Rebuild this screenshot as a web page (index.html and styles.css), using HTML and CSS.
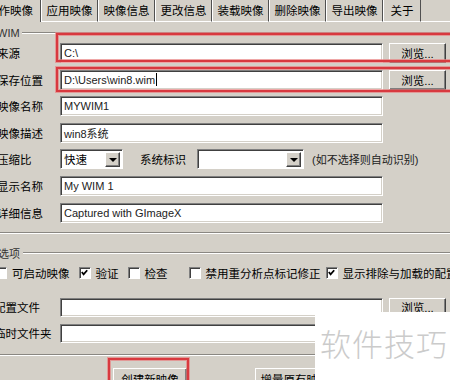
FILE: index.html
```html
<!DOCTYPE html>
<html lang="zh-CN">
<head>
    <meta charset="UTF-8">
    <title>GImageX</title>
    <link rel="stylesheet" href="styles.css">
</head>
<body>
    <div class="window">
        <div class="tabs">
            <div class="tab active">制作映像</div>
            <div class="tab">应用映像</div>
            <div class="tab">映像信息</div>
            <div class="tab">更改信息</div>
            <div class="tab">装载映像</div>
            <div class="tab">删除映像</div>
            <div class="tab">导出映像</div>
            <div class="tab short">关于</div>
            <div class="tab-rest"></div>
        </div>

        <div class="group wim">
            <div class="legend"><span>WIM</span><i class="etch"></i></div>

            <div class="rows">
                <div class="row">
                    <label>来源</label>
                    <div class="field">C:\</div>
                    <button class="btn browse">浏览...</button>
                </div>
                <div class="row">
                    <label>保存位置</label>
                    <div class="field">D:\Users\win8.wim<span class="caret"></span></div>
                    <button class="btn browse">浏览...</button>
                </div>
                <div class="row">
                    <label>映像名称</label>
                    <div class="field">MYWIM1</div>
                </div>
                <div class="row">
                    <label>映像描述</label>
                    <div class="field">win8系统</div>
                </div>
                <div class="row">
                    <label>压缩比</label>
                    <div class="select small"><span>快速</span><i class="arrow"></i></div>
                    <span class="inline-label">系统标识</span>
                    <div class="select wide"><span></span><i class="arrow"></i></div>
                    <span class="note">(如不选择则自动识别)</span>
                </div>
                <div class="row">
                    <label>显示名称</label>
                    <div class="field">My WIM 1</div>
                </div>
                <div class="row">
                    <label>详细信息</label>
                    <div class="field">Captured with GImageX</div>
                </div>
            </div>
        </div>
        <div class="etch-line"></div>

        <div class="group options">
            <div class="legend"><span>选项</span><i class="etch"></i></div>

            <div class="checks">
                <div class="check"><i class="box"></i>可启动映像</div>
                <div class="check"><i class="box checked"><svg viewBox="0 0 10 10"><polyline points="2,4.5 4,7 8,2.5" /></svg></i>验证</div>
                <div class="check far"><i class="box"></i>检查</div>
                <div class="check near"><i class="box"></i>禁用重分析点标记修正</div>
                <div class="check"><i class="box checked"><svg viewBox="0 0 10 10"><polyline points="2,4.5 4,7 8,2.5" /></svg></i>显示排除与加载的配置</div>
            </div>

            <div class="rows lower">
                <div class="row">
                    <label>配置文件</label>
                    <div class="field"></div>
                    <button class="btn browse">浏览...</button>
                </div>
                <div class="row">
                    <label>临时文件夹</label>
                    <div class="field"></div>
                </div>
            </div>
        </div>
        <div class="etch-line bottom"></div>

        <div class="actions">
            <button class="btn create">创建新映像</button>
            <button class="btn append">增量原有映像</button>
        </div>

        <div class="mark mark-source"></div>
        <div class="mark mark-target"></div>
        <div class="mark mark-create"></div>

        <div class="watermark">软件技巧</div>
    </div>
</body>
</html>
```

FILE: styles.css
```css
* {
    margin: 0;
    padding: 0;
    box-sizing: border-box;
}

body {
    width: 450px;
    height: 380px;
    overflow: hidden;
    background-color: #d4d0c8;
    font-family: 'Liberation Sans', 'Noto Sans CJK SC', sans-serif;
    font-size: 11.5px;
    color: #000;
}

.window {
    position: relative;
    width: 450px;
    height: 380px;
    overflow: hidden;
}

/* tab strip */
.tabs {
    display: flex;
    height: 22px;
    margin-left: -20px;
}

.tab {
    width: 57px;
    height: 22px;
    display: flex;
    align-items: center;
    justify-content: center;
    padding-bottom: 2px;
    border-left: 1px solid #fff;
    border-right: 1px solid #505050;
    border-bottom: 1px solid #fff;
    white-space: nowrap;
}

.tab.active {
    width: 61px;
    border-bottom: none;
    border-left: none;
}

.tab.short {
    width: 38px;
}

.tab-rest {
    flex: 1;
    border-bottom: 1px solid #fff;
}

/* group boxes */
.legend {
    display: flex;
    align-items: center;
    height: 12px;
    gap: 2px;
    color: #333;
}

.legend span {
    font-size: 11px;
}

.etch {
    flex: 1;
    height: 2px;
    border-top: 1px solid #8a8782;
    border-bottom: 1px solid #fff;
}

.etch-line {
    height: 2px;
    border-top: 1px solid #8a8782;
    border-bottom: 1px solid #fff;
}

.wim {
    margin: 5px 0 0 -3px;
    padding-bottom: 9px;
}

.options {
    margin: 13px 0 0 -2px;
}

.options .legend {
    gap: 3px;
}

.rows {
    display: flex;
    flex-direction: column;
    gap: 6.6px;
    margin-top: 4px;
}

.row {
    display: flex;
    align-items: center;
    height: 20px;
}

.row label {
    width: 63px;
    flex-shrink: 0;
    white-space: nowrap;
}

.lower {
    margin: 18px 0 11px -4px;
    gap: 7px;
}

.lower .row {
    height: 19px;
}

.lower .row label {
    width: 66px;
}

.field {
    width: 323px;
    height: 100%;
    background: #fff;
    border: 1px solid;
    border-color: #808080 #fff #fff #808080;
    box-shadow: inset 1px 1px #404040, inset -1px -1px #d4d0c8;
    font-size: 11px;
    padding: 0 3px;
    display: flex;
    align-items: center;
    white-space: nowrap;
    color: #222;
}

.caret {
    display: inline-block;
    width: 1px;
    height: 13px;
    background: #000;
    margin-left: 1px;
}

.btn {
    font-family: 'Liberation Sans', 'Noto Sans CJK SC', sans-serif;
    font-size: 11.5px;
    color: #000;
    background: #d4d0c8;
    border: 1px solid;
    border-color: #fff #404040 #404040 #fff;
    box-shadow: inset -1px -1px #808080;
}

.browse {
    width: 57px;
    height: 100%;
    margin-left: 6px;
}

/* combo boxes */
.select {
    height: 100%;
    background: #fff;
    border: 1px solid;
    border-color: #808080 #fff #fff #808080;
    box-shadow: inset 1px 1px #404040;
    display: flex;
    align-items: center;
    justify-content: space-between;
    padding: 2px 2px 2px 3px;
}

.select.small {
    width: 63px;
}

.select.wide {
    width: 107px;
    margin-left: 11px;
}

.arrow {
    width: 15px;
    height: 15px;
    background: #d4d0c8;
    border: 1px solid;
    border-color: #fff #404040 #404040 #fff;
    box-shadow: inset -1px -1px #808080;
    position: relative;
}

.arrow::after {
    content: '';
    position: absolute;
    left: 3px;
    top: 5px;
    border-left: 4px solid transparent;
    border-right: 4px solid transparent;
    border-top: 4px solid #000;
}

.inline-label {
    margin-left: 17px;
    white-space: nowrap;
}

.note {
    margin-left: 8px;
    font-size: 11px;
    white-space: nowrap;
    color: #222;
}

/* check boxes */
.checks {
    display: flex;
    align-items: center;
    height: 14px;
    margin: 7px 0 0 -3px;
    white-space: nowrap;
}

.check {
    display: flex;
    align-items: center;
    gap: 5px;
    margin-right: 9px;
}

.check.far {
    margin-right: 21px;
}

.check.near {
    margin-right: 5px;
}

.box {
    width: 12px;
    height: 12px;
    flex-shrink: 0;
    background: #fff;
    border: 1px solid;
    border-color: #808080 #fff #fff #808080;
    box-shadow: inset 1px 1px #404040;
    display: flex;
    align-items: center;
    justify-content: center;
}

.box svg {
    width: 9px;
    height: 9px;
    fill: none;
    stroke: #000;
    stroke-width: 2;
}

/* bottom buttons */
.actions {
    display: flex;
    margin: 12px 0 0 113px;
}

.create {
    width: 74px;
    height: 22px;
}

.append {
    width: 80px;
    height: 22px;
    margin-left: 68px;
}

/* red highlight marks drawn over the dialog */
.mark {
    position: absolute;
    border: 2px solid #d8393f;
    box-shadow: 0 0 0 1px rgba(232, 130, 130, 0.7), inset 0 0 0 1px rgba(232, 130, 130, 0.7);
}

.mark-source {
    left: 56px;
    top: 33px;
    width: 400px;
    height: 29px;
}

.mark-target {
    left: 56px;
    top: 67px;
    width: 400px;
    height: 25px;
}

.mark-create {
    left: 108px;
    top: 358px;
    width: 81px;
    height: 30px;
}

/* site watermark */
.watermark {
    position: absolute;
    left: 315px;
    top: 312px;
    right: 0;
    bottom: 0;
    background: #fff;
    color: #cbcbcb;
    font-family: 'Noto Sans CJK SC', sans-serif;
    font-weight: 300;
    font-size: 31px;
    letter-spacing: 1px;
    padding: 15px 0 0 5px;
    white-space: nowrap;
    line-height: 1;
}
```
